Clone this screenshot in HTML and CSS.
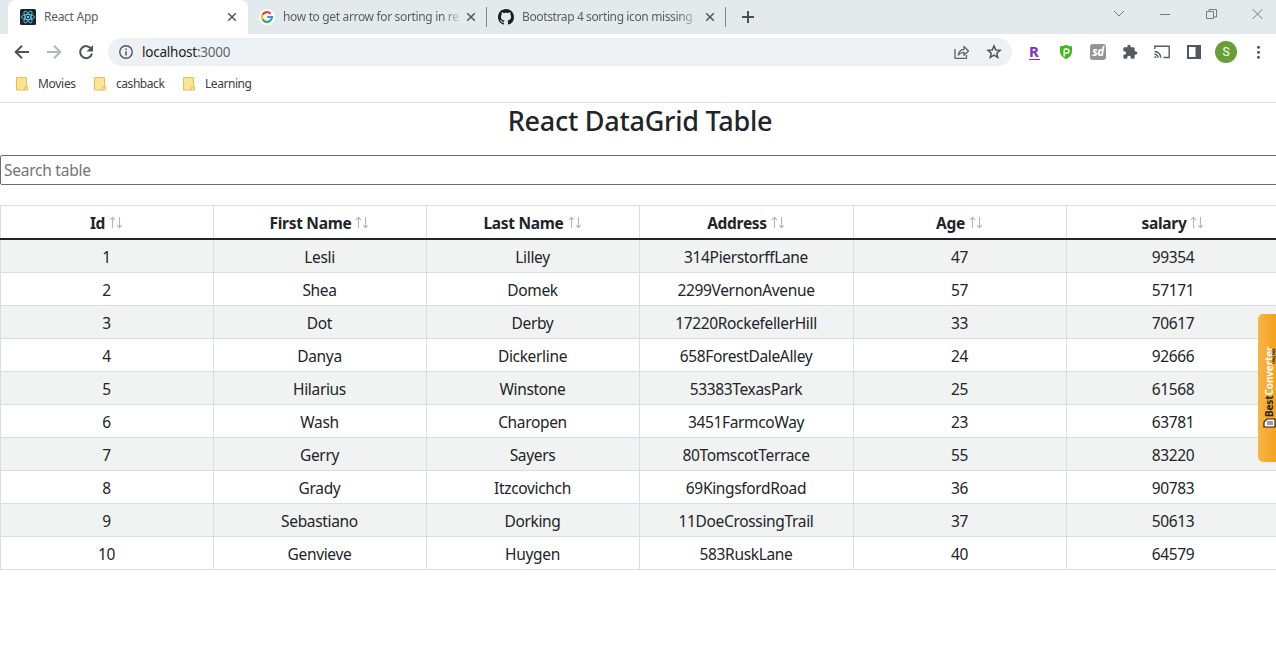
FILE: index.html
```html
<!DOCTYPE html>
<html lang="en">
<head>
<meta charset="utf-8">
<title>React App</title>
<link rel="stylesheet" href="styles.css">
</head>
<body>
<svg class="defs" width="0" height="0">
  <symbol id="close" viewBox="0 0 10 10"><path d="M1.200 1.200l7.600 7.600M8.800 1.200L1.200 8.800" fill="none" stroke="#50555a" stroke-width="1.500"/></symbol>
  <symbol id="folder" viewBox="0 0 13 15"><path d="M1.500 1.500h10v9h1v3.500h-11z" fill="#f9e498" stroke="#eebd4b"/><path d="M9.500 14v-3h2" fill="none" stroke="#eebd4b"/></symbol>
  <symbol id="sort" viewBox="0 0 14 13"><path d="M3.500 12V1.500M1 4l2.500-2.700L6 4M10.500 1v10.500M8 9l2.500 2.700L13 9" fill="none" stroke="#b3b5b7" stroke-width="1.100"/></symbol>
</svg>
<div class="tabstrip">
  <div class="tab tab-active">
    <svg class="favicon" viewBox="0 0 16 16"><rect width="16" height="16" rx="1.500" fill="#20232a"/><g fill="none" stroke="#61dafb" stroke-width=".8"><ellipse cx="8" cy="8" rx="6.600" ry="2.600"/><ellipse cx="8" cy="8" rx="6.600" ry="2.600" transform="rotate(60 8 8)"/><ellipse cx="8" cy="8" rx="6.600" ry="2.600" transform="rotate(120 8 8)"/></g><circle cx="8" cy="8" r="1.200" fill="#61dafb"/></svg>
    <span class="tab-title title-react">React App</span>
    <svg class="close"><use href="#close"/></svg>
  </div>
  <div class="tab tab-back">
    <svg class="favicon" viewBox="0 0 16 16"><circle cx="8" cy="8" r="8" fill="#fff"/><g fill="none" stroke-width="2.200"><path d="M11.700 4.700A5 5 0 0 0 3.600 5.700" stroke="#ea4335"/><path d="M3.600 5.700A5 5 0 0 0 3.600 10.300" stroke="#fbbc05"/><path d="M3.600 10.300A5 5 0 0 0 11.300 11.700" stroke="#34a853"/><path d="M11.300 11.700A5 5 0 0 0 13 8H8.200" stroke="#4285f4"/></g></svg>
    <span class="tab-title title-google fade">how to get arrow for sorting in re</span>
    <svg class="close"><use href="#close"/></svg>
  </div>
  <div class="tab tab-back">
    <svg class="favicon" viewBox="0 0 16 16"><path fill="#1b1f23" d="M8 0C3.580 0 0 3.580 0 8c0 3.540 2.290 6.530 5.470 7.590.4.070.55-.17.55-.38 0-.19-.01-.82-.01-1.490-2.010.37-2.530-.49-2.690-.94-.09-.23-.48-.94-.82-1.130-.28-.15-.68-.52-.01-.53.63-.01 1.080.58 1.230.82.72 1.210 1.870.87 2.330.66.070-.52.28-.87.51-1.070-1.780-.2-3.640-.89-3.640-3.950 0-.87.31-1.590.82-2.150-.08-.2-.36-1.020.08-2.120 0 0 .67-.21 2.200.82.64-.18 1.320-.27 2-.27s1.360.09 2 .27c1.530-1.040 2.200-.82 2.200-.82.44 1.100.16 1.920.08 2.120.51.56.82 1.270.82 2.150 0 3.070-1.870 3.750-3.650 3.950.29.25.54.73.54 1.480 0 1.070-.01 1.930-.01 2.200 0 .21.15.46.55.38A8 8 0 0 0 16 8c0-4.420-3.580-8-8-8z"/></svg>
    <span class="tab-title title-github fade">Bootstrap 4 sorting icon missing</span>
    <svg class="close"><use href="#close"/></svg>
  </div>
  <svg class="new-tab" viewBox="0 0 14 14"><path d="M7 1v12M1 7h12" stroke="#4b4f54" stroke-width="2"/></svg>
  <svg class="window-controls" viewBox="0 0 150 14"><g fill="none" stroke="#777b7f"><path d="M1 4l5 5 5-5M47 7.500h10"/><path d="M93.500 4.500h7v7h-7zM96 4V2.500h7.500V10H101"/><path d="M139.500 2l10 10M149.500 2l-10 10"/></g></svg>
</div>
<div class="toolbar">
  <svg class="nav" viewBox="0 0 16 16"><path d="M15 8H2M8 1.700L1.700 8 8 14.300" fill="none" stroke="#50555a" stroke-width="2"/></svg>
  <svg class="nav" viewBox="0 0 16 16"><path d="M1 8h13M8 1.700L14.300 8 8 14.300" fill="none" stroke="#b4b7b9" stroke-width="2"/></svg>
  <svg class="nav" viewBox="0 0 16 16"><path d="M13.300 5A6 6 0 1 0 14 9.500" fill="none" stroke="#50555a" stroke-width="2"/><path d="M15 1v6.500H8.500z" fill="#50555a"/></svg>
  <div class="omnibox">
    <svg class="info" viewBox="0 0 14 14"><circle cx="7" cy="7" r="6.200" fill="none" stroke="#50555a" stroke-width="1.400"/><path d="M7 6.200v4.300M7 3.400v1.500" stroke="#50555a" stroke-width="1.500"/></svg>
    <span class="url">localhost<span class="port">:3000</span></span>
    <svg class="share" viewBox="0 0 16 16"><path d="M1 5v9.300h11.500V11M4.300 11C4.800 7.500 6.800 5.500 10 5.300V2.500L14.500 7 10 11.200V8.300C7.500 8.200 5.800 9 4.300 11z" fill="none" stroke="#5f6368" stroke-width="1.300" stroke-linejoin="round"/></svg>
    <svg class="star" viewBox="0 0 16 16"><path d="M8 1.900l1.750 4.050 4.350.38-3.300 2.870 1 4.300L8 11.200l-3.800 2.300 1-4.300-3.300-2.870 4.350-.38z" fill="none" stroke="#50555a" stroke-width="1.500"/></svg>
  </div>
  <div class="extensions">
    <span class="ext-r">R</span>
    <svg viewBox="0 0 16 16"><path d="M2 2.300Q5.500 2.300 8 .8q2.500 1.500 6 1.500v5q0 5-6 7.900-6-2.900-6-7.900z" fill="#3fba1a"/><path d="M6.300 12.500V5M6.300 5h2.500a2 2 0 0 1 0 4.200H7" fill="none" stroke="#fff" stroke-width="1.600"/></svg>
    <span class="ext-sd">sd</span>
    <svg viewBox="0 0 24 24"><path fill="#555b61" d="M20.500 11H19V7a2 2 0 0 0-2-2h-4V3.500a2.500 2.500 0 0 0-5 0V5H4a2 2 0 0 0-2 2v3.800h1.500a2.700 2.700 0 0 1 0 5.400H2V20a2 2 0 0 0 2 2h3.800v-1.500a2.700 2.700 0 0 1 5.400 0V22H17a2 2 0 0 0 2-2v-4h1.500a2.500 2.500 0 0 0 0-5z"/></svg>
    <svg viewBox="0 0 16 16"><path d="M.8 5V2.200h14.400v11.300H9.500M.5 7.500a6.200 6.200 0 0 1 6.200 6.200M.5 10.200A3.500 3.500 0 0 1 4 13.700" fill="none" stroke="#555b61" stroke-width="1.400"/><path d="M.5 12a2 2 0 0 1 2 2h-2z" fill="#555b61"/></svg>
    <svg viewBox="0 0 16 16"><path d="M1 1h14v14H1zM3 3v10h6.500V3z" fill="#50585f" fill-rule="evenodd"/></svg>
    <span class="avatar">S</span>
    <svg viewBox="0 0 16 16"><g fill="#50555a"><circle cx="8.500" cy="3.300" r="1.500"/><circle cx="8.500" cy="8.300" r="1.500"/><circle cx="8.500" cy="13.300" r="1.500"/></g></svg>
  </div>
</div>
<div class="bookmarks">
  <div class="bookmark bm-movies"><svg><use href="#folder"/></svg><span>Movies</span></div>
  <div class="bookmark bm-cashback"><svg><use href="#folder"/></svg><span>cashback</span></div>
  <div class="bookmark"><svg><use href="#folder"/></svg><span>Learning</span></div>
</div>
<main class="page">
  <h3 class="heading">React DataGrid Table</h3>
  <input class="search" type="text" placeholder="Search table">
  <table class="grid">
    <colgroup><col class="c213"><col class="c213"><col class="c213"><col class="c214"><col class="c213"><col class="c214"></colgroup>
    <thead>
      <tr>
        <th>Id<svg><use href="#sort"/></svg></th>
        <th>First Name<svg><use href="#sort"/></svg></th>
        <th>Last Name<svg><use href="#sort"/></svg></th>
        <th>Address<svg><use href="#sort"/></svg></th>
        <th>Age<svg><use href="#sort"/></svg></th>
        <th>salary<svg><use href="#sort"/></svg></th>
      </tr>
    </thead>
    <tbody>
      <tr><td>1</td><td>Lesli</td><td>Lilley</td><td>314PierstorffLane</td><td>47</td><td>99354</td></tr>
      <tr><td>2</td><td>Shea</td><td>Domek</td><td>2299VernonAvenue</td><td>57</td><td>57171</td></tr>
      <tr><td>3</td><td>Dot</td><td>Derby</td><td>17220RockefellerHill</td><td>33</td><td>70617</td></tr>
      <tr><td>4</td><td>Danya</td><td>Dickerline</td><td>658ForestDaleAlley</td><td>24</td><td>92666</td></tr>
      <tr><td>5</td><td>Hilarius</td><td>Winstone</td><td>53383TexasPark</td><td>25</td><td>61568</td></tr>
      <tr><td>6</td><td>Wash</td><td>Charopen</td><td>3451FarmcoWay</td><td>23</td><td>63781</td></tr>
      <tr><td>7</td><td>Gerry</td><td>Sayers</td><td>80TomscotTerrace</td><td>55</td><td>83220</td></tr>
      <tr><td>8</td><td>Grady</td><td>Itzcovichch</td><td>69KingsfordRoad</td><td>36</td><td>90783</td></tr>
      <tr><td>9</td><td>Sebastiano</td><td>Dorking</td><td>11DoeCrossingTrail</td><td>37</td><td>50613</td></tr>
      <tr><td>10</td><td>Genvieve</td><td>Huygen</td><td>583RuskLane</td><td>40</td><td>64579</td></tr>
    </tbody>
  </table>
</main>
<aside class="converter">
  <div class="converter-label"><svg viewBox="0 0 11 13"><path d="M2 1h5l3 3v8H2z" fill="#fff" stroke="#222" stroke-width="1.200"/><path d="M4 5h4M4 7h4M4 9h4" stroke="#222" stroke-width=".9"/></svg><span>Best</span><span class="white">Converter</span></div>
  <div class="converter-sub">ONLINE</div>
</aside>
</body>
</html>
```
FILE: styles.css
```css
* { box-sizing: border-box; }
body {
  margin: 0;
  width: 1276px;
  height: 665px;
  overflow: hidden;
  position: relative;
  background: #fff;
  color: #212529;
  font-family: "Noto Sans", "Open Sans", sans-serif;
}
svg { display: block; flex: none; }
.defs { position: absolute; }

.tabstrip {
  display: flex;
  height: 34px;
  background: #e4e9ec;
}
.tab {
  display: flex;
  align-items: center;
  height: 34px;
  white-space: nowrap;
  font-size: 12px;
  letter-spacing: -.28px;
  color: #5a5e62;
}
.tab-active {
  width: 240px;
  margin-left: 8px;
  padding-left: 12px;
  background: #fff;
  border-radius: 8px 8px 0 0;
}
.tab-back {
  width: 239px;
  height: 20px;
  margin-top: 7px;
  padding-left: 11px;
  border-right: 1px solid #85898d;
}
.favicon { width: 16px; height: 16px; margin-right: 8px; }
.tab-title { line-height: 18px; }
.title-react { width: 183px; }
.title-google { width: 176px; margin-right: 7px; letter-spacing: -.34px; }
.title-github { width: 173px; margin-right: 10px; letter-spacing: -.38px; }
.fade {
  -webkit-mask-image: linear-gradient(90deg, #000 90%, rgba(0, 0, 0, .25));
  mask-image: linear-gradient(90deg, #000 90%, rgba(0, 0, 0, .25));
}
.close { width: 10px; height: 10px; }
.new-tab { width: 14px; height: 14px; margin: 10px 0 0 15px; }
.window-controls { width: 150px; height: 14px; margin: 7px 13px 0 auto; }

.toolbar {
  display: flex;
  align-items: center;
  height: 36px;
  padding-left: 14px;
}
.nav { width: 16px; height: 16px; margin-right: 16px; }
.omnibox {
  display: flex;
  align-items: center;
  width: 904px;
  height: 28px;
  margin-left: -2px;
  padding: 0 10px 0 11px;
  border-radius: 14px;
  background: #eef1f3;
}
.info { width: 14px; height: 14px; margin-right: 9px; }
.url { font-size: 13.500px; line-height: 20px; letter-spacing: -.23px; color: #202124; }
.port { color: #62666a; }
.share { width: 16px; height: 16px; margin-left: auto; }
.star { width: 16px; height: 16px; margin-left: 16px; }
.extensions {
  display: flex;
  align-items: center;
  gap: 16px;
  margin-left: 14px;
}
.extensions svg { width: 16px; height: 16px; }
.ext-r {
  width: 16px;
  height: 15px;
  text-align: center;
  font-size: 15px;
  line-height: 13px;
  font-weight: 700;
  color: #7b2fd0;
}
.ext-r::after { content: ""; display: block; width: 11px; height: 1px; margin: 1px auto 0; background: #7b2fd0; }
.ext-sd {
  width: 16px;
  height: 16px;
  border-radius: 3px;
  background: #949494;
  color: #fff;
  text-align: center;
  font-size: 11.500px;
  line-height: 15px;
  letter-spacing: -.5px;
  font-weight: 700;
  font-style: italic;
}
.avatar {
  width: 22px;
  height: 22px;
  margin: 0 -3px;
  border-radius: 50%;
  background: #689f38;
  color: #fff;
  text-align: center;
  font: 12px/22px Roboto, sans-serif;
}

.bookmarks {
  display: flex;
  height: 33px;
  padding: 0 0 5px 15px;
  border-bottom: 1px solid #d9dcdf;
}
.bookmark {
  display: flex;
  align-items: center;
  font-size: 12px;
  letter-spacing: -.45px;
  color: #3c4043;
}
.bookmark svg { width: 13px; height: 15px; margin-right: 10px; }
.bm-movies { width: 78px; letter-spacing: -.3px; }
.bm-cashback { width: 89px; }

.page { width: 1280px; }
.heading {
  margin: 0 0 15px;
  height: 37px;
  text-align: center;
  font-size: 27px;
  line-height: 36px;
  letter-spacing: -.25px;
  font-weight: 500;
}
.search {
  display: block;
  width: 1280px;
  height: 30px;
  margin: 0 0 20px;
  padding: 0 3px;
  border: 1px solid #6c6c70;
  border-radius: 2px;
  background: #fff;
  font: 15.500px "Noto Sans", sans-serif;
  letter-spacing: -.25px;
}
.search::placeholder { color: #757575; }
.grid {
  width: 1280px;
  table-layout: fixed;
  border-collapse: separate;
  border-spacing: 0;
  font-size: 15.500px;
  line-height: 20px;
  letter-spacing: -.34px;
  text-align: center;
}
.c213 { width: 213px; }
.c214 { width: 214px; }
.grid th {
  height: 35px;
  padding: 1px 0 0;
  border-top: 1px solid #dadee2;
  border-bottom: 2px solid #212529;
  background: linear-gradient(#dadee2, #dadee2) 0 0 / 1px 100% no-repeat;
  font-weight: 700;
  letter-spacing: -.3px;
}
.grid th svg { display: inline-block; width: 14px; height: 13px; margin-left: 4px; vertical-align: 0; }
.grid td {
  height: 33px;
  padding: 1px 1px 0 0;
  border-left: 1px solid #dadee2;
  border-bottom: 1px solid #dadee2;
}
.grid tbody tr:nth-child(odd) { background: #f1f2f2; }

.converter {
  position: absolute;
  right: 0;
  top: 314px;
  width: 18px;
  height: 148px;
  border-radius: 5px 0 0 5px;
  background: linear-gradient(90deg, #f8b545, #f5a21d);
}
.converter-label {
  position: absolute;
  left: 5px;
  top: 115px;
  display: flex;
  align-items: center;
  height: 13px;
  transform: rotate(-90deg);
  transform-origin: 0 0;
  font: 700 10px/13px "Noto Sans", sans-serif;
  letter-spacing: -.13px;
  white-space: nowrap;
  color: #222;
}
.converter-label svg { width: 11px; height: 13px; margin-right: 1px; }
.white { color: #fff; }
.converter-sub {
  position: absolute;
  left: 14px;
  top: 50px;
  transform: rotate(-90deg);
  transform-origin: 0 0;
  font: 700 4px/4px "Noto Sans", sans-serif;
}
```
